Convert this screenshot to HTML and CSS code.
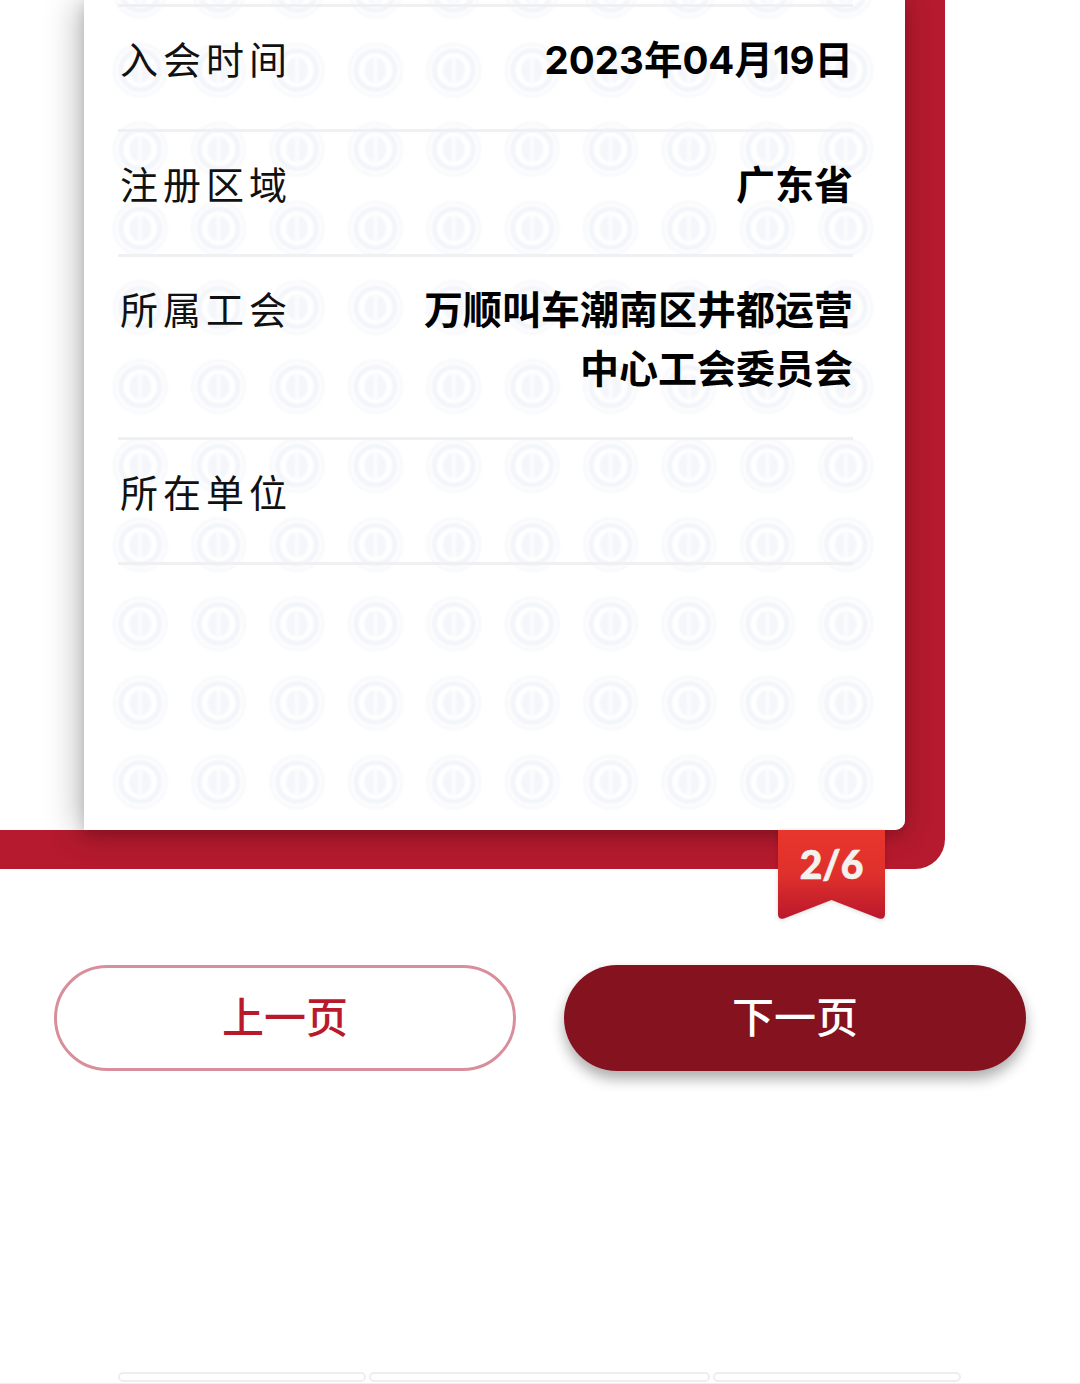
FILE: index.html
```html
<!DOCTYPE html>
<html lang="zh">
<head>
<meta charset="utf-8">
<title>会员信息</title>
<link rel="stylesheet" href="styles.css">
</head>
<body>
<main class="page">
  <section class="frame">
    <div class="frame-body">
      <div class="inner">
        <div class="sheet">
          <svg class="watermark" width="821" height="829" aria-hidden="true">
            <defs>
              <pattern id="logo" x="17" y="-48.5" width="78.4" height="79.1" patternUnits="userSpaceOnUse">
                <g transform="translate(39.2 39.5)" fill="none" stroke="#f2f4f9">
                  <circle r="26" stroke-width="3" stroke="#f7f8fb"/>
                  <circle r="19.500" stroke-width="5"/>
                  <ellipse rx="11" ry="13" fill="#f4f6fa" stroke="none"/>
                  <path d="M0-14V14" stroke="#fcfcfe" stroke-width="4"/>
                </g>
              </pattern>
              <filter id="soft" x="-2%" y="-2%" width="104%" height="104%">
                <feGaussianBlur stdDeviation="0.9"/>
              </filter>
            </defs>
            <rect x="22" width="770" height="829" fill="url(#logo)" filter="url(#soft)"/>
          </svg>
          <div class="rows">
            <div class="top-rule"></div>
            <div class="row"><span class="label">入会时间</span><span class="value value-date">2023年04月19日</span></div>
            <div class="row"><span class="label">注册区域</span><span class="value">广东省</span></div>
            <div class="row"><span class="label">所属工会</span><span class="value">万顺叫车潮南区井都运营中心工会委员会</span></div>
            <div class="row"><span class="label">所在单位</span><span class="value"></span></div>
          </div>
        </div>
      </div>
    </div>
    <div class="ribbon">
      <svg class="ribbon-bg" width="107" height="90" viewBox="0 0 107 90" aria-hidden="true">
        <defs>
          <linearGradient id="rib" x1="0" y1="0" x2="0" y2="1">
            <stop offset="0" stop-color="#e8362c"/>
            <stop offset=".5" stop-color="#e0302c"/>
            <stop offset="1" stop-color="#b9182c"/>
          </linearGradient>
        </defs>
        <path d="M0 0H107V84Q107 90 101 88.500L53.500 70L6 88.500Q0 90 0 84Z" fill="url(#rib)"/>
      </svg>
      <span class="ribbon-text">2/6</span>
    </div>
  </section>
  <nav class="actions">
    <button class="btn btn-prev" type="button">上一页</button>
    <button class="btn btn-next" type="button">下一页</button>
  </nav>
  <footer class="tabs">
    <span class="tab tab-a"></span>
    <span class="tab tab-b"></span>
    <span class="tab tab-a"></span>
  </footer>
</main>
</body>
</html>
```
FILE: styles.css
```css
* { box-sizing: border-box; }
html, body { margin: 0; padding: 0; background: #fff; }
body { width: 1080px; height: 1384px; overflow: hidden; font-family: "Noto Sans CJK SC", "Noto Sans", sans-serif; }
.page { width: 1080px; height: 1384px; overflow: hidden; border-bottom: 1px solid #eee; }

.frame { position: relative; width: 945px; height: 869px; }
.frame-body {
  height: 869px;
  padding: 0 40px 39px 0;
  border-radius: 0 0 30px 0;
  background: #b51a2e;
  overflow: hidden;
}
.inner {
  height: 830px;
  padding-left: 84px;
  background: #fff;
  border-radius: 0 0 10px 0;
}
.sheet {
  position: relative;
  height: 830px;
  background: #fff;
  border-radius: 0 0 10px 0;
  box-shadow: -6px 1px 34px rgba(0, 0, 0, .26), 0 5px 14px rgba(0, 0, 0, .14);
}
.watermark { position: absolute; left: 0; top: 0; }
.rows { position: relative; padding: 0 52px 0 34px; }
.top-rule { height: 7px; border-bottom: 3px solid #f0f0f2; }
.row {
  display: flex;
  justify-content: space-between;
  padding: 21px 0 41px 2px;
  min-height: 125px;
  border-bottom: 3px solid #f0f0f2;
}
.label { flex: none; font-size: 38px; line-height: 59px; letter-spacing: 5px; color: #111; font-weight: 400; }
.value {
  width: 432px;
  margin: 2px 0 -2px;
  font-family: Inter, "Noto Sans CJK SC", sans-serif;
  font-size: 39px; line-height: 59px; font-weight: 700; color: #000; text-align: right;
}
.value-date { margin: 3px 0 -3px; font-size: 38.500px; }

.ribbon { position: absolute; left: 778px; top: 830px; width: 107px; height: 90px; }
.ribbon-bg { display: block; filter: drop-shadow(0 1px 2px rgba(0,0,0,.15)); }
.ribbon-text {
  position: absolute; left: 0; right: 0; top: 8px;
  text-align: center; font-family: Lato, sans-serif; font-size: 39px; line-height: 52px; font-weight: 900; color: #f4f1ee;
  -webkit-text-stroke: .7px #f4f1ee;
}

.actions { display: flex; gap: 48px; padding: 96px 0 0 54px; }
.btn {
  width: 462px; height: 106px; border-radius: 53px;
  font-family: inherit; font-size: 42px; font-weight: 500; padding: 0 0 8px;
}
.btn-prev { background: #fff; border: 3px solid #d98f9b; color: #b81a2c; }
.btn-next { background: #85121f; border: 0; color: #fff; box-shadow: 0 8px 14px rgba(0, 0, 0, .32); }

.tabs { display: flex; gap: 3px; padding: 301px 0 0 118px; }
.tab { height: 10px; border: 2px solid #eee; border-radius: 5px; background: #fff; }
.tab-a { width: 248px; }
.tab-b { width: 341px; }
```
